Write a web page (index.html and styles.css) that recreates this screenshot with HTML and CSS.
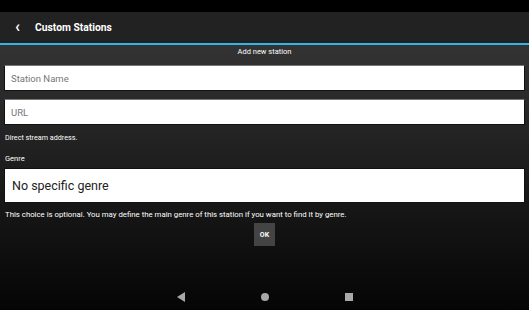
FILE: index.html
```html
<!DOCTYPE html>
<html lang="en">
<head>
    <meta charset="UTF-8">
    <meta name="viewport" content="width=device-width, initial-scale=1.0">
    <title>Custom Stations</title>
    <link rel="stylesheet" href="styles.css">
</head>
<body>

<div class="status-bar"></div>

<!-- Barra de titulo -->
<header class="toolbar">
    <span class="back">&#8249;</span>
    <h1>Custom Stations</h1>
</header>

<main class="content">
    <div class="section-title">Add new station</div>

    <div class="field">
        <input type="text" class="text-input" placeholder="Station Name">
    </div>
    <div class="field">
        <input type="text" class="text-input" placeholder="URL">
    </div>
    <p class="hint">Direct stream address.</p>

    <p class="label">Genre</p>
    <div class="select-box">No specific genre</div>
    <p class="hint hint-long">This choice is optional. You may define the main genre of this station if you want to find it by genre.</p>

    <div class="actions">
        <button class="ok">OK</button>
    </div>
</main>

<!-- Navegacao do sistema -->
<nav class="nav-bar">
    <svg width="10" height="10" viewBox="0 0 10 10"><polygon points="9,0 9,10 1,5" fill="#a8a8a8"/></svg>
    <svg width="10" height="10" viewBox="0 0 10 10"><circle cx="5" cy="5" r="4" fill="#a8a8a8"/></svg>
    <svg width="10" height="10" viewBox="0 0 10 10"><rect x="1" y="1" width="8" height="8" fill="#a8a8a8"/></svg>
</nav>

</body>
</html>
```

FILE: styles.css
```css
* {
    margin: 0;
    padding: 0;
    box-sizing: border-box;
}

body {
    font-family: 'Roboto', 'Liberation Sans', sans-serif;
    width: 529px;
    height: 310px;
    overflow: hidden;
    display: flex;
    flex-direction: column;
    background: linear-gradient(#3b3b3b, #1a1a1a 60%, #050505);
    color: #fff;
}

.status-bar {
    height: 12px;
    background-color: #000;
}

.toolbar {
    height: 33px;
    background-color: #222;
    border-bottom: 2px solid #33b5e5;
    display: flex;
    align-items: center;
    padding-left: 15px;
}

.back {
    font-size: 16px;
    font-weight: bold;
    width: 20px;
    margin-top: -3px;
}

.toolbar h1 {
    font-size: 10.3px;
    font-weight: bold;
}

.content {
    flex: 1;
    padding: 0 4px;
}

.section-title {
    text-align: center;
    font-size: 7.5px;
    line-height: 10px;
    margin: 2px 0 8px;
}

.field {
    margin-bottom: 8px;
}

.text-input {
    width: 100%;
    height: 26px;
    background-color: #fff;
    border: 1px solid #111;
    border-top: 1px solid #777;
    padding: 0 6px;
    font-family: inherit;
    font-size: 9.5px;
    outline: none;
}

.text-input::placeholder {
    color: #777;
}

.hint {
    font-size: 7.2px;
    line-height: 10px;
    margin: 3px 1px 0;
}

.label {
    font-size: 7.5px;
    line-height: 10px;
    margin: 11px 1px 4px;
}

.select-box {
    height: 35px;
    background-color: #fff;
    border: 1px solid #111;
    color: #222;
    font-size: 12.5px;
    display: flex;
    align-items: center;
    padding-left: 7px;
}

.hint-long {
    font-size: 7.8px;
    margin-top: 7px;
}

.actions {
    display: flex;
    justify-content: center;
    margin-top: 3px;
}

.ok {
    width: 21px;
    height: 23px;
    background-color: #444;
    color: #fff;
    border: none;
    font-family: inherit;
    font-size: 7px;
    font-weight: bold;
}

.nav-bar {
    height: 25px;
    display: flex;
    justify-content: center;
    align-items: center;
    gap: 74px;
    padding-bottom: 1px;
}
```
